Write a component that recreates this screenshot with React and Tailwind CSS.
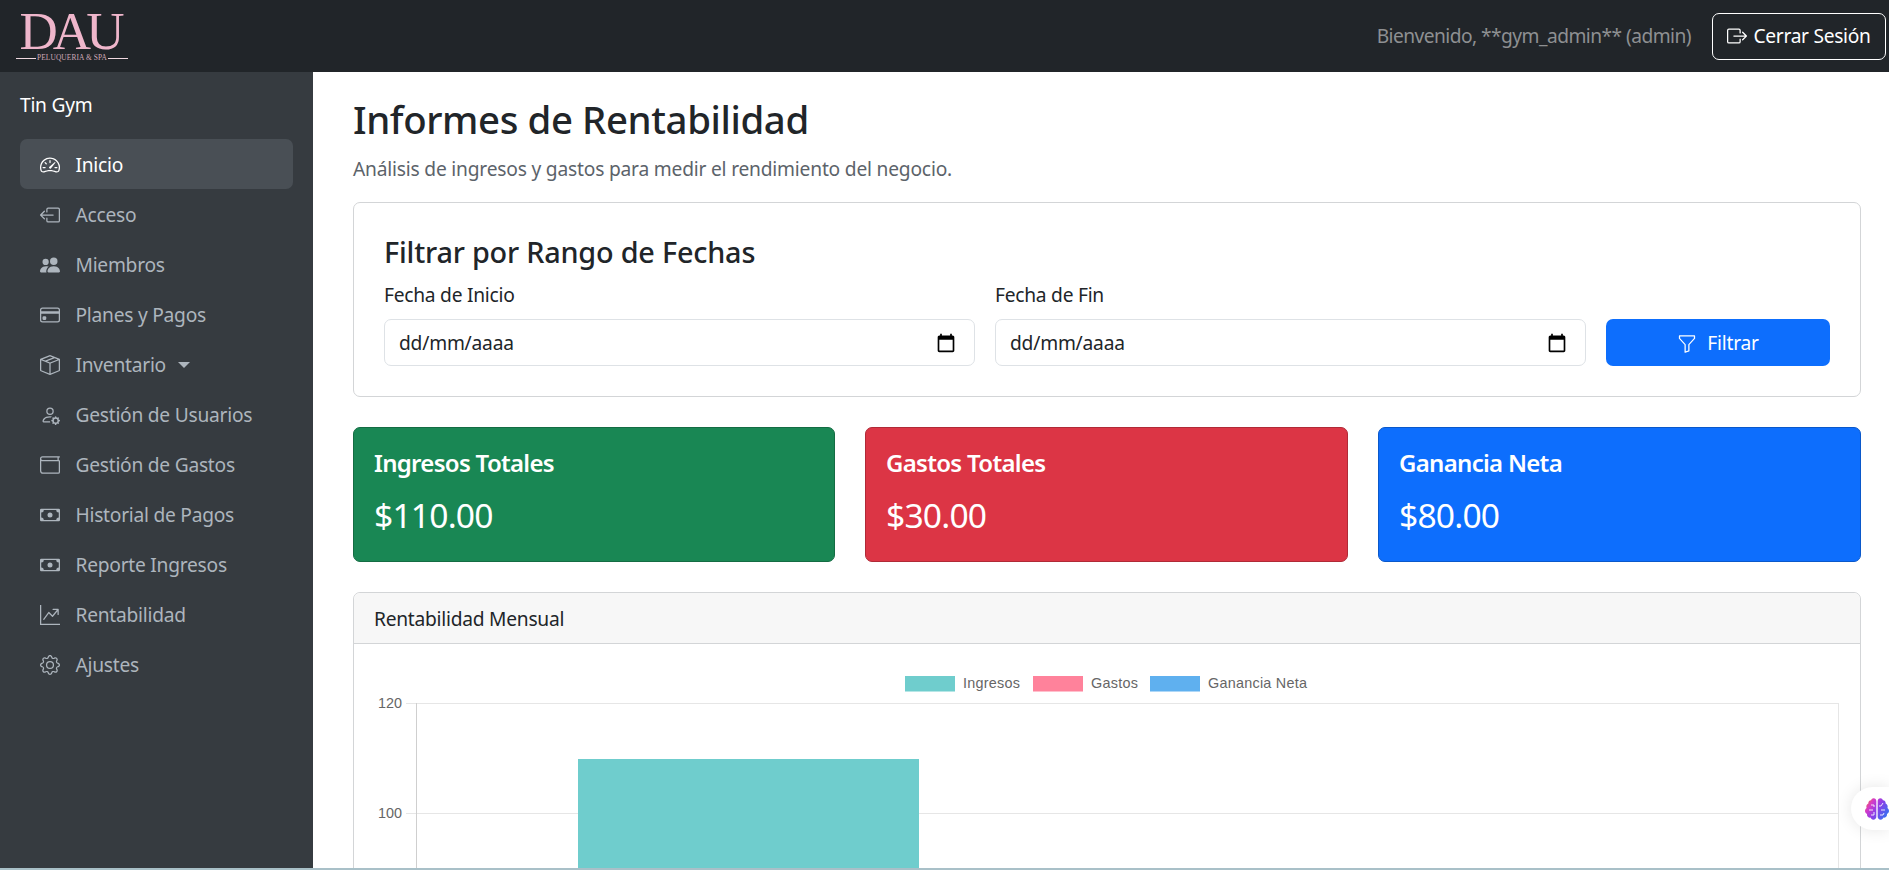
import React from 'react';
import { BsSpeedometer2, BsBoxArrowLeft, BsPeopleFill, BsCreditCard, BsBoxSeam, BsPersonGear, BsWallet, BsCash, BsGraphUpArrow, BsGear, BsBoxArrowRight, BsFunnel } from 'react-icons/bs';
import { FaBrain } from 'react-icons/fa';

const nav = [
  { label: 'Inicio', Icon: BsSpeedometer2, active: true },
  { label: 'Acceso', Icon: BsBoxArrowLeft },
  { label: 'Miembros', Icon: BsPeopleFill },
  { label: 'Planes y Pagos', Icon: BsCreditCard },
  { label: 'Inventario', Icon: BsBoxSeam, caret: true },
  { label: 'Gestión de Usuarios', Icon: BsPersonGear },
  { label: 'Gestión de Gastos', Icon: BsWallet },
  { label: 'Historial de Pagos', Icon: BsCash },
  { label: 'Reporte Ingresos', Icon: BsCash },
  { label: 'Rentabilidad', Icon: BsGraphUpArrow },
  { label: 'Ajustes', Icon: BsGear },
];

function Logo() {
  return (
    <div className="ml-[16px] flex w-[112px] flex-col items-center">
      <div className="font-['Liberation_Serif',serif] text-[53px] leading-[44px] tracking-[-5px] text-[#efb6cb] pr-[5px]">DAU</div>
      <div className="flex w-full items-center gap-[1px]">
        <span className="h-px flex-1 bg-[#f0d8e0]" />
        <span className="font-['Liberation_Serif',serif] text-[7.4px] leading-[10px] tracking-[0.1px] text-[#cfa9b8]">PELUQUERIA &amp; SPA</span>
        <span className="h-px flex-1 bg-[#f0d8e0]" />
      </div>
    </div>
  );
}

function CalendarIcon() {
  return (
    <svg viewBox="0 0 24 24" className="h-[20px] w-[20px] shrink-0" fill="#000">
      <path d="M20 3h-1V1h-2v2H7V1H5v2H4c-1.1 0-2 .9-2 2v16c0 1.1.9 2 2 2h16c1.1 0 2-.9 2-2V5c0-1.1-.9-2-2-2zm0 18H4V8h16v13z" />
    </svg>
  );
}

function DateField({ label }) {
  return (
    <div className="flex min-w-0 flex-1 flex-col">
      <div className="mb-[10px] text-[19.2px] leading-[29px] tracking-[-0.25px] text-[#212529]">{label}</div>
      <div className="flex h-[47px] items-center justify-between rounded-[7px] border border-[#dee2e6] bg-white pl-[14px] pr-[18px]">
        <span className="pt-[2px] text-[19.2px] tracking-[-0.2px] text-[#212529]">dd/mm/aaaa</span>
        <CalendarIcon />
      </div>
    </div>
  );
}

function Stat({ title, value, bg, border }) {
  return (
    <div className={`h-[135px] rounded-[7px] border pl-[20px] pt-[18px] text-white ${bg} ${border}`}>
      <div className="text-[24px] font-semibold leading-[34px] tracking-[-0.7px]">{title}</div>
      <div className="mt-[15px] text-[33.6px] leading-[40px] tracking-[-0.8px]">{value}</div>
    </div>
  );
}

function Chart() {
  const ox = 354;
  const oy = 644;
  const legend = [
    { x: 905, tx: 963, label: 'Ingresos', color: '#6fcdcd' },
    { x: 1033, tx: 1091, label: 'Gastos', color: '#ff829b' },
    { x: 1150, tx: 1208, label: 'Ganancia Neta', color: '#5fb0ef' },
  ];
  return (
    <svg width="1506" height="500" className="block" fontFamily="'Liberation Sans', Arial, sans-serif" fontSize="14.4" fill="#666">
      {legend.map((l) => (
        <g key={l.label}>
          <rect x={l.x - ox} y={676 - oy} width="50" height="15.5" fill={l.color} />
          <text x={l.tx - ox} y={688 - oy} letterSpacing="0.25">{l.label}</text>
        </g>
      ))}
      <line x1={406 - ox} x2={1838 - ox} y1={703.5 - oy} y2={703.5 - oy} stroke="#e6e6e6" />
      <line x1={406 - ox} x2={1838 - ox} y1={813.5 - oy} y2={813.5 - oy} stroke="#e6e6e6" />
      <line x1={416.5 - ox} x2={416.5 - ox} y1={703 - oy} y2="500" stroke="#cfcfcf" />
      <line x1={1838.5 - ox} x2={1838.5 - ox} y1={703 - oy} y2="500" stroke="#e6e6e6" />
      <rect x={578 - ox} y={759 - oy} width="341" height="400" fill="#6fcdcd" />
      <text x={402 - ox} y={708 - oy} textAnchor="end">120</text>
      <text x={402 - ox} y={818 - oy} textAnchor="end">100</text>
    </svg>
  );
}

export default function App() {
  return (
    <div className="flex h-[870px] w-full flex-col overflow-hidden bg-white font-['Noto_Sans',sans-serif] text-[#212529]">
      <header className="flex h-[72px] shrink-0 items-center justify-between bg-[#212529] pr-[3px]">
        <Logo />
        <div className="flex items-center">
          <span className="mr-[21px] text-[19.2px] tracking-[-0.55px] text-[#8e9092]">Bienvenido, **gym_admin** (admin)</span>
          <button className="flex h-[47px] w-[174px] items-center justify-center gap-[6px] rounded-[7px] border border-white text-[19.2px] tracking-[-0.3px] text-white">
            <BsBoxArrowRight className="text-[20px]" />
            Cerrar Sesión
          </button>
        </div>
      </header>

      <div className="flex min-h-0 flex-1">
        <aside className="w-[313px] shrink-0 bg-[#363b40] px-[20px] pt-[18px]">
          <div className="mb-[20px] text-[19.2px] leading-[29px] tracking-[-0.25px] text-white">Tin Gym</div>
          <nav className="flex flex-col">
            {nav.map(({ label, Icon, active, caret }) => (
              <a
                key={label}
                className={`flex h-[50px] items-center gap-[15.5px] rounded-[7px] pl-[20px] pt-[2px] text-[19.2px] tracking-[-0.25px] ${active ? 'bg-[#494f55] text-white' : 'text-[#adb5bd]'}`}
              >
                <Icon className="shrink-0 text-[20px]" />
                <span>{label}</span>
                {caret && <span className="-ml-[3px] h-0 w-0 border-x-[6.5px] border-t-[6.5px] border-x-transparent border-t-[#adb5bd]" />}
              </a>
            ))}
          </nav>
        </aside>

        <main className="relative min-w-0 flex-1 overflow-hidden pl-[40px] pr-[28px] pt-[24px]">
          <h1 className="text-[38.4px] font-medium leading-[46px] tracking-[-0.4px] text-[#212529]">Informes de Rentabilidad</h1>
          <p className="mb-[19px] mt-[12px] text-[19.2px] leading-[29px] tracking-[-0.2px] text-[#5c636a]">Análisis de ingresos y gastos para medir el rendimiento del negocio.</p>

          <section className="h-[195px] rounded-[7px] border border-[#d3d5d7] pl-[30px] pr-[30px] pt-[31px]">
            <h2 className="mb-[11px] text-[28.8px] font-medium leading-[35px] tracking-[-0.2px]">Filtrar por Rango de Fechas</h2>
            <div className="flex items-end gap-[20.5px]">
              <DateField label="Fecha de Inicio" />
              <DateField label="Fecha de Fin" />
              <button className="flex h-[47px] w-[224px] shrink-0 items-center justify-center gap-[10px] rounded-[7px] bg-[#0d6efd] pt-[2px] text-[19.2px] tracking-[-0.25px] text-white">
                <BsFunnel className="text-[20px]" />
                Filtrar
              </button>
            </div>
          </section>

          <div className="mt-[30px] grid grid-cols-[482px_483px_483px] gap-[30px]">
            <Stat title="Ingresos Totales" value="$110.00" bg="bg-[#198754]" border="border-[#146c43]" />
            <Stat title="Gastos Totales" value="$30.00" bg="bg-[#dc3545]" border="border-[#b02a37]" />
            <Stat title="Ganancia Neta" value="$80.00" bg="bg-[#0d6efd]" border="border-[#0a58ca]" />
          </div>

          <section className="mt-[30px] rounded-[7px] border border-[#d3d5d7]">
            <div className="flex h-[51px] items-center rounded-t-[7px] border-b border-[#d3d5d7] bg-[#f7f7f7] pl-[20px] pt-[2px] text-[19.2px] tracking-[-0.25px]">Rentabilidad Mensual</div>
            <Chart />
          </section>

          <div className="absolute bottom-[38px] right-0 flex h-[43px] w-[38px] items-center rounded-l-full bg-white pl-[14px] shadow-[0_0_16px_rgba(0,0,0,0.1)]">
            <svg width="0" height="0" className="absolute">
              <defs>
                <linearGradient id="brainGrad" x1="0" y1="0" x2="1" y2="0.6">
                  <stop offset="0" stopColor="#f9731c" />
                  <stop offset="0.3" stopColor="#d63bc8" />
                  <stop offset="0.6" stopColor="#8b3fe8" />
                  <stop offset="1" stopColor="#3f6df0" />
                </linearGradient>
              </defs>
            </svg>
            <div className="relative shrink-0">
              <FaBrain className="block text-[24px]" style={{ fill: 'url(#brainGrad)' }} />
              <svg viewBox="0 0 24 24" className="absolute inset-0 h-[24px] w-[24px]" fill="none" stroke="#fff" strokeWidth="1" strokeOpacity="0.85">
                <path d="M6 8h3v2M4 13h4M6 18h3v-3M18 6l-2 3h-2M16 13h4M15 18h3l1-2" />
              </svg>
            </div>
          </div>
        </main>
      </div>
      <div className="h-[2px] shrink-0 bg-[#a9c0c8]" />
    </div>
  );
}
